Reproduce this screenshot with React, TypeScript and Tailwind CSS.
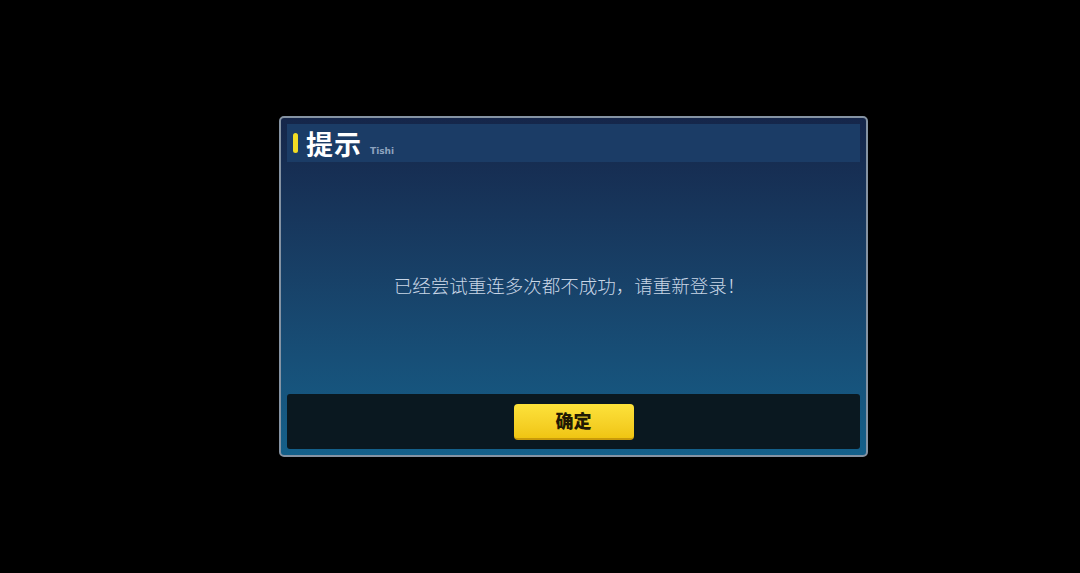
import React from 'react';

const cjk = { fontFamily: '"Noto Sans CJK SC", "Noto Sans", sans-serif' };

const App: React.FC = () => {
    return (
        <div className="w-[1080px] h-[573px] bg-black pt-[116px] pl-[279px]" style={cjk}>
            <div className="w-[589px] h-[341px] rounded-[5px] border-2 border-[#8593a3] bg-gradient-to-b from-[#15264a] to-[#14608a] p-[6px] flex flex-col">
                <div className="h-[38px] bg-[#1b3c66] flex items-center pl-[6px]">
                    <div className="w-[5px] h-[20px] rounded-full bg-[#f2dc24]" />
                    <div className="ml-[8px] text-[27px] font-bold text-white leading-none tracking-[1px]">提示</div>
                    <div className="ml-[8px] mt-[16px] text-[9px] font-bold text-[#8ea3bf] leading-none" style={{ fontFamily: '"DejaVu Sans", sans-serif' }}>Tishi</div>
                </div>
                <div className="flex-1 flex items-center justify-center pt-[16px]">
                    <div className="text-[18.5px] font-light text-[#c9d6e6] pr-[8px]">已经尝试重连多次都不成功，请重新登录！</div>
                </div>
                <div className="h-[55px] rounded-[3px] bg-[#0a1820] flex items-center justify-center">
                    <button className="w-[120px] h-[36px] rounded-[4px] bg-gradient-to-b from-[#fde23a] to-[#f0c512] border-b-2 border-[#c99a0a] text-[18px] font-black text-[#221a04]">
                        确定
                    </button>
                </div>
            </div>
        </div>
    );
};

export default App;
